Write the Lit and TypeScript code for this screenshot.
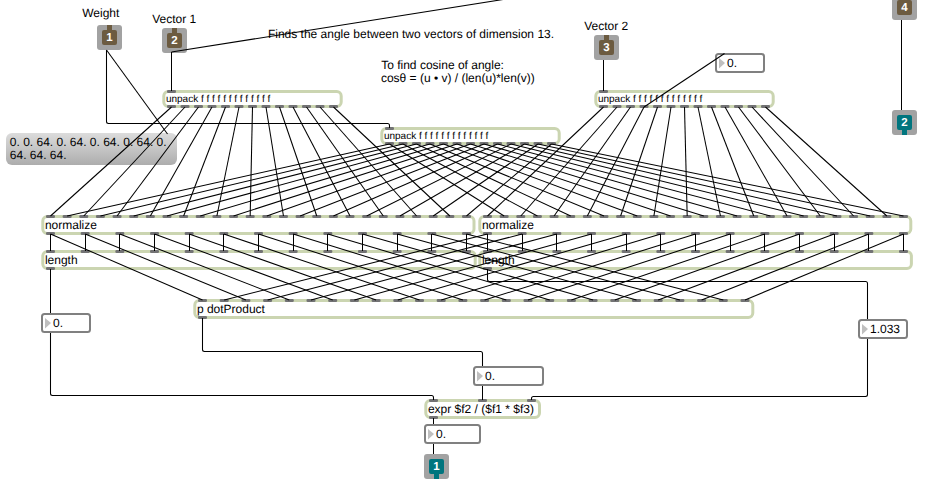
import { LitElement, html, svg, css } from "lit";
import { customElement } from "lit/decorators.js";

interface ObjectBox {
  x: number; y: number; w: number; h: number;
  label: string;
  inlets: number[];
  outlets: number[];
  small?: boolean;
}

// n evenly spaced port centres between two x positions
const spread = (n: number, from: number, to: number): number[] =>
  Array.from({ length: n }, (_, i) => from + ((to - from) * i) / (n - 1));

const unpackText = "unpack " + Array(13).fill("f").join(" ");

const unpackA: ObjectBox = { x: 162.3, y: 90, w: 180.4, h: 18, label: unpackText, small: true, inlets: [171.5], outlets: spread(13, 171.5, 333.5) };
const unpackW: ObjectBox = { x: 380.3, y: 127, w: 180.4, h: 18, label: unpackText, small: true, inlets: [389.5], outlets: spread(13, 389.5, 551.5) };
const unpackB: ObjectBox = { x: 594.3, y: 90, w: 180.4, h: 18, label: unpackText, small: true, inlets: [603.5], outlets: spread(13, 603.5, 765.5) };
const normA: ObjectBox = { x: 41.3, y: 215, w: 434.2, h: 20, label: "normalize", inlets: spread(26, 50.5, 466.5), outlets: spread(13, 50.5, 466.5) };
const normB: ObjectBox = { x: 478.3, y: 215, w: 434, h: 20, label: "normalize", inlets: spread(26, 487.5, 903.5), outlets: spread(13, 487.5, 903.5) };
const lenA: ObjectBox = { x: 41.3, y: 250, w: 435.4, h: 20, label: "length", inlets: spread(13, 50.5, 466.5), outlets: [50.5] };
const lenB: ObjectBox = { x: 478.3, y: 250, w: 434.6, h: 20, label: "length", inlets: spread(13, 487.5, 903.5), outlets: [487.5] };
const dot: ObjectBox = { x: 193.3, y: 299, w: 561, h: 20, label: "p dotProduct", inlets: spread(26, 202.5, 745), outlets: [202.5] };
const expr: ObjectBox = { x: 424.3, y: 399, w: 116.7, h: 20, label: "expr $f2 / ($f1 * $f3)", inlets: [433.5, 482.5, 531.5], outlets: [433.5] };

const objects = [unpackA, unpackW, unpackB, normA, normB, lenA, lenB, dot, expr];

const numbers = [
  { x: 715, y: 53, w: 50, value: "0." },
  { x: 41, y: 313, w: 50, value: "0." },
  { x: 858, y: 319, w: 50, value: "1.033" },
  { x: 473, y: 366, w: 71, value: "0." },
  { x: 424, y: 424, w: 57, value: "0." },
];

const ports = [
  { x: 97, y: 25, n: "1", out: false },
  { x: 162, y: 28, n: "2", out: false },
  { x: 594, y: 35, n: "3", out: false },
  { x: 892, y: -5, n: "4", out: false },
  { x: 892, y: 110, n: "2", out: true },
  { x: 424, y: 454, n: "1", out: true },
];

const comments = [
  { x: 82.2, y: 17, text: "Weight" },
  { x: 152.2, y: 23, text: "Vector 1" },
  { x: 584.2, y: 30, text: "Vector 2" },
  { x: 267.9, y: 38, text: "Finds the angle between two vectors of dimension 13." },
  { x: 381.2, y: 69, text: "To find cosine of angle:" },
  { x: 380.9, y: 82, text: "cosθ = (u • v) / (len(u)*len(v))" },
];

const link = (x1: number, y1: number, x2: number, y2: number) => `M${x1} ${y1}L${x2} ${y2}`;

const fans: string[] = [];
for (let i = 0; i < 13; i++) {
  fans.push(
    link(unpackA.outlets[i], 107, normA.inlets[2 * i], 216),
    link(unpackW.outlets[i], 144, normA.inlets[2 * i + 1], 216),
    link(unpackB.outlets[i], 107, normB.inlets[2 * i], 216),
    link(unpackW.outlets[i], 144, normB.inlets[2 * i + 1], 216),
    link(normA.outlets[i], 234, dot.inlets[2 * i], 300),
    link(normB.outlets[i], 234, dot.inlets[2 * i + 1], 300),
  );
}
const drops: string[] = [];
for (let i = 0; i < 13; i++) {
  for (const [a, b] of [[normA, lenA], [normB, lenB]]) {
    const x = Math.floor(a.outlets[i]) + 0.5;
    drops.push(link(x, 234, Math.floor(b.inlets[i]) + 0.5, 251));
  }
}

const cords = [
  "M171.5 52L520 -3.2",
  "M106.5 50L167.5 134",
  "M644 107L724.5 53.5",
  "M106.5 50V121.5Q106.5 123.5 108.5 123.5H387.5Q389.5 123.5 389.5 125.5V128",
  "M171.5 52V91",
  "M603.5 60V91",
  "M901.5 20V110",
  "M50.5 269V313",
  "M50.5 333V393.5Q50.5 395.5 52.5 395.5H431.5Q433.5 395.5 433.5 397.5V400",
  "M202.5 318V349.5Q202.5 351.5 204.5 351.5H480.5Q482.5 351.5 482.5 353.5V366",
  "M482.5 386V400",
  "M487.5 269V279.5Q487.5 281.5 489.5 281.5H865.5Q867.5 281.5 867.5 283.5V319",
  "M867.5 339V394.5Q867.5 396.5 865.5 396.5H533.5Q531.5 396.5 531.5 398.5V400",
  "M433.5 418V424",
  "M433.5 444V454",
];

@customElement("app-root")
export class AppRoot extends LitElement {
  static styles = css`
    :host { display: block; width: 927px; height: 490px; overflow: hidden; background: #fff; }
    .patch { display: block; font: 12px "Liberation Sans", Arial, sans-serif; fill: #000; text-rendering: geometricPrecision; }
    .small { font-size: 10px; }
    .object { fill: #fff; stroke: #cbd5b1; stroke-width: 3; }
    .port { fill: #727274; }
    .number { fill: #fff; stroke: #808080; stroke-width: 2; }
    .arrow { fill: #bfbfbf; }
    .pad { fill: #a2a2a2; }
    .in { fill: #6c5b40; }
    .out { fill: #00757e; }
    .digit { fill: #fff; font-weight: bold; font-size: 11.5px; text-anchor: middle; }
    .cord { fill: none; stroke: #000; stroke-width: 1.05; }
    .from { stop-color: #dcdcdc; }
    .to { stop-color: #adadad; }
  `;

  private objectBox(o: ObjectBox) {
    const port = (x: number, y: number) =>
      svg`<rect class="port" x=${x - 4.5} y=${y} width="9" height="3" rx="1.3"></rect>`;
    return svg`<g>
      <rect class="object" x=${o.x + 1.5} y=${o.y + 1.5} width=${o.w - 3} height=${o.h - 3} rx="4.5"></rect>
      ${o.inlets.map((x) => port(x, o.y))}
      ${o.outlets.map((x) => port(x, o.y + o.h - 3))}
      <text class=${o.small ? "small" : ""} x=${o.x + 3.6} y=${o.y + (o.small ? 12 : 14)}>${o.label}</text>
    </g>`;
  }

  private numberBox(n: { x: number; y: number; w: number; value: string }) {
    return svg`<g>
      <rect class="number" x=${n.x + 1} y=${n.y + 1} width=${n.w - 2} height="18" rx="2.5"></rect>
      <path class="arrow" d=${`M${n.x + 4} ${n.y + 5}l6 5l-6 5.5z`}></path>
      <text x=${n.x + 12} y=${n.y + 14}>${n.value}</text>
    </g>`;
  }

  private portBox(p: { x: number; y: number; n: string; out: boolean }) {
    const tone = p.out ? "out" : "in";
    return svg`<g>
      <rect class="pad" x=${p.x} y=${p.y} width="25" height="25" rx="3"></rect>
      <rect class=${tone} x=${p.x + 5} y=${p.y + 5} width="15" height="15" rx="2"></rect>
      <rect class=${tone} x=${p.x + 10} y=${p.out ? p.y + 19 : p.y} width="5" height="6"></rect>
      <text class="digit" x=${p.x + 12.5} y=${p.y + 16.4}>${p.n}</text>
    </g>`;
  }

  render() {
    return html`<svg class="patch" width="927" height="490" viewBox="0 0 927 490">
      <defs>
        <linearGradient id="message" x1="0" y1="0" x2="0" y2="1">
          <stop class="from" offset="0"></stop><stop class="to" offset="1"></stop>
        </linearGradient>
      </defs>
      <rect x="6" y="133" width="171" height="32" rx="6" fill="url(#message)"></rect>
      <text x="9.8" y="146">0. 0. 64. 0. 64. 0. 64. 0. 64. 0.</text>
      <text x="9.8" y="159">64. 64. 64.</text>
      ${comments.map((c) => svg`<text x=${c.x} y=${c.y}>${c.text}</text>`)}
      ${objects.map((o) => this.objectBox(o))}
      ${numbers.map((n) => this.numberBox(n))}
      ${ports.map((p) => this.portBox(p))}
      ${[...fans, ...drops, ...cords].map((d) => svg`<path class="cord" d=${d}></path>`)}
    </svg>`;
  }
}
